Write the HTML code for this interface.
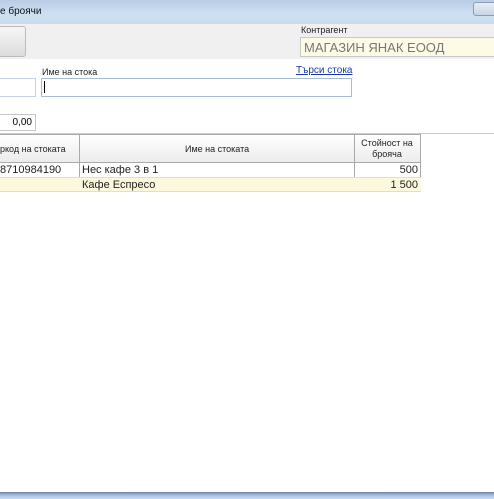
<!DOCTYPE html>
<html><head><meta charset="utf-8"><style>
body{margin:0;width:494px;height:499px;overflow:hidden;background:#fff;font-family:"Liberation Sans",sans-serif;position:relative}
div{position:absolute;box-sizing:border-box}
.t{font-size:9px;color:#222;white-space:nowrap}
</style></head><body>
<div style="left:0;top:0;width:494px;height:24px;background:linear-gradient(#b9cde6,#cfe0f2 60%,#c8dbef)"></div>
<div class="t" style="left:0;top:6px;font-size:10px;color:#111">е броячи</div>
<div style="left:473px;top:2px;width:24px;height:14px;border:1px solid #8a9cb5;border-radius:3px;background:linear-gradient(#e8eef6,#c8d4e4)"></div>
<div style="left:0;top:24px;width:494px;height:35px;background:#f0f0f0"></div>
<div style="left:-4px;top:26px;width:30px;height:31px;border:1px solid #bbb;border-radius:3px;background:linear-gradient(#f6f6f6,#dcdcdc)"></div>
<div class="t" style="left:301px;top:25px">Контрагент</div>
<div style="left:300px;top:37px;width:200px;height:20px;border:1px solid #c8c8c8;background:#fdfbe6;font-size:13px;color:#777;padding:2px 0 0 3px;white-space:nowrap">МАГАЗИН ЯНАК ЕООД</div>
<div class="t" style="left:42px;top:67px">Име на стока</div>
<div class="t" style="left:296px;top:65px;font-size:10px;color:#1a3aa8;text-decoration:underline">Търси стока</div>
<div style="left:-2px;top:78px;width:38px;height:19px;border:1px solid #c5d3e3"></div>
<div style="left:41px;top:78px;width:311px;height:19px;border:1px solid #a9bcd6"></div>
<div style="left:44px;top:81px;width:1px;height:12px;background:#000"></div>
<div style="left:-2px;top:114px;width:38px;height:17px;border:1px solid #c5c5c5;font-size:10px;text-align:right;padding:2px 3px 0 0">0,00</div>
<div style="left:0;top:133px;width:494px;height:1px;background:#ccc"></div>
<div style="left:-1px;top:134px;width:422px;height:29px;background:linear-gradient(#fff,#ececec);border:1px solid #aaa"></div>
<div style="left:79px;top:134px;width:1px;height:58px;background:#aaa"></div>
<div style="left:354px;top:134px;width:1px;height:58px;background:#aaa"></div>
<div style="left:420px;top:134px;width:1px;height:58px;background:#aaa"></div>
<div class="t" style="left:0;top:144px">ркод на стоката</div>
<div class="t" style="left:185px;top:144px">Име на стоката</div>
<div class="t" style="left:356px;top:138px;width:62px;text-align:center;white-space:normal;line-height:11px">Стойност на<br>брояча</div>
<div style="left:0;top:177px;width:421px;height:15px;background:#fcf8dc;border-bottom:1px solid #ddd"></div>
<div style="left:0;top:177px;width:421px;height:1px;background:#ddd"></div>
<div class="t" style="left:0;top:164px;font-size:11px">8710984190</div>
<div class="t" style="left:82px;top:164px;font-size:11px">Нес кафе 3 в 1</div>
<div class="t" style="left:356px;top:164px;width:62px;text-align:right;font-size:11px">500</div>
<div class="t" style="left:82px;top:179px;font-size:11px">Кафе Еспресо</div>
<div class="t" style="left:356px;top:179px;width:62px;text-align:right;font-size:11px">1 500</div>
<div style="left:0;top:492px;width:494px;height:7px;background:linear-gradient(#6f82a6,#a9c3e6 50%,#c9dbf0)"></div>
</body></html>
